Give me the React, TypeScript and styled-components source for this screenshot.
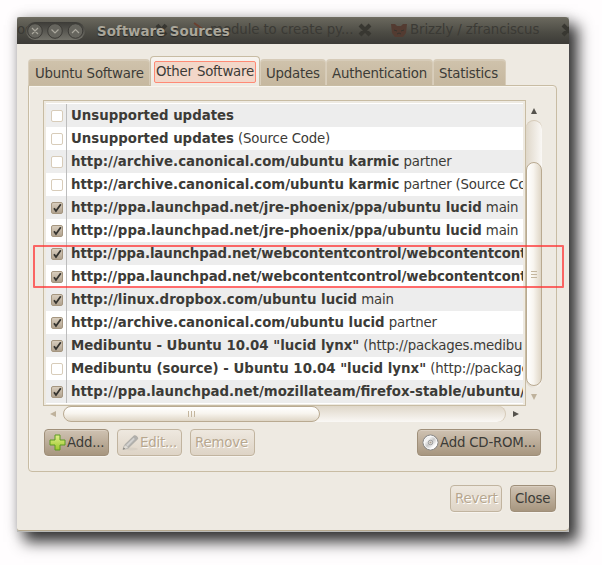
import React from "react";
import styled, { createGlobalStyle, css } from "styled-components";

const Global = createGlobalStyle`
  * { box-sizing: border-box; }
  body { margin: 0; background: #fffdfe; font: 13.33px/16px "DejaVu Sans", sans-serif; letter-spacing: -0.2px; color: #3c3b37; overflow: hidden; }
`;

const Desktop = styled.main`
  width: 602px;
  height: 565px;
  padding: 17px 33px 33px 17px;
`;

const Window = styled.section`
  position: relative;
  width: 552px;
  height: 515px;
  display: flex;
  flex-direction: column;
  background: #b9bab8;
  box-shadow: 8px 9px 14px 1px rgba(0, 0, 0, 0.78), 0 0 12px rgba(0, 0, 0, 0.17);
`;

const TitleBar = styled.header`
  position: relative;
  height: 27px;
  flex: none;
  display: flex;
  align-items: center;
  padding-left: 9px;
  overflow: hidden;
  border-radius: 3px 4px 0 0;
  background: linear-gradient(#716e63, #67655b 8%, #4b4a43 60%, #3c3b37);
`;

const Controls = styled.div`
  position: relative;
  width: 59px;
  height: 18px;
  border-radius: 9px;
  background: linear-gradient(#3c3b37, #74736b);
  svg { display: block; }
`;

const Title = styled.h1`
  position: relative;
  margin: 2px 0 0 12px;
  font-size: 13.4px;
  letter-spacing: 0;
  line-height: 18px;
  color: #aaa69a;
  text-shadow: 0 1px 1px #222;
  white-space: nowrap;
`;

const Ghost = styled.span<{ $x: number }>`
  position: absolute;
  left: ${(p) => p.$x}px;
  top: 5px;
  letter-spacing: -0.1px;
  color: #3b3a35;
  white-space: nowrap;
`;

const GhostMarks = styled.svg`
  position: absolute;
  left: 0;
  top: 0;
`;

const Body = styled.div`
  height: 487px;
  padding: 12px 12px 0 11px;
  background: #eeeae2;
  border-bottom: 1px solid #b5a88e;
  border-radius: 0 0 4px 3px;
`;

const Tabs = styled.nav`
  display: flex;
  align-items: flex-end;
  height: 29px;
  position: relative;
`;

const Tab = styled.div<{ $w: number; $active?: boolean }>`
  width: ${(p) => p.$w}px;
  height: 26px;
  padding: 4px 0 0 5px;
  line-height: 18px;
  white-space: nowrap;
  border: 1px solid #d6cbb8;
  border-top-width: 2px;
  border-left-color: #d9cebb;
  border-bottom: 0;
  border-radius: 4px 4px 0 0;
  background: linear-gradient(#cfc2ab, #c6b89f);
  &:first-child { padding-left: 6px; }
  ${(p) => p.$active && css`
    height: 30px;
    margin-bottom: -1px;
    padding: 4px 3px;
    border: 1px solid #c8bca3;
    border-bottom: 0;
    background: linear-gradient(#f7f4ef, #eeeae2);
  `}
`;

const Focus = styled.span`
  display: block;
  width: 102px;
  height: 22px;
  padding-left: 1px;
  line-height: 19px;
  border: 1px solid #ff8a75;
  border-radius: 2px;
  background: #f2d7c9;
`;

const Panel = styled.div`
  width: 529px;
  height: 387px;
  padding: 14px 0 0 14px;
  border: 1px solid #c8bca3;
  border-radius: 0 4px 4px 4px;
  box-shadow: inset 1px 1px #f8f5ef;
`;

const ScrollArea = styled.div`
  display: grid;
  grid-template-columns: 483px 16px;
  grid-template-rows: 306px 16px;
`;

const ListFrame = styled.div`
  padding: 2px;
  border: 1px solid #c8bca3;
`;

const List = styled.div`
  height: 301px;
  border-top: 1px solid #fff;
  overflow: hidden;
  background: #fff;
`;

const Row = styled.div`
  display: flex;
  height: 23px;
  background: #fff;
  white-space: nowrap;
  line-height: 23px;
  &:nth-child(odd) { background: #ededed; }
`;

const CheckCell = styled.div`
  flex: none;
  width: 21px;
  padding: 6px 0 0 5px;
  border-right: 1px solid #bdbdbd;
`;

const Checkbox = styled.div<{ $on: boolean }>`
  width: 12px;
  height: 12px;
  border: 1px solid ${(p) => (p.$on ? "#a59680" : "#d8ccb9")};
  border-radius: 2px;
  background: ${(p) => (p.$on ? "linear-gradient(#d8cdbd, #b1a390)" : "#fff")};
  svg { display: block; }
`;

const SourceName = styled.div<{ $tight: boolean }>`
  padding-left: 4px;
  b { letter-spacing: ${(p) => (p.$tight ? "-0.1px" : "0")}; }
`;

const VBar = styled.div`
  display: flex;
  flex-direction: column;
  align-items: center;
  padding-top: 8px;
  svg { display: block; flex: none; }
`;

const VTrough = styled.div`
  width: 16px;
  height: 268px;
  margin: 6px 0;
  padding-top: 42px;
  border-radius: 8px;
  background: linear-gradient(90deg, #dfd7c9, #faf8f5);
  box-shadow: inset 0 1px #d6cbb9;
`;

const VThumb = styled.div`
  display: flex;
  align-items: center;
  justify-content: center;
  height: 224px;
  border: 1px solid #b9aa91;
  border-radius: 8px;
  background: linear-gradient(90deg, #fff, #f8f5ef 45%, #dfd6c6);
`;

const HBar = styled.div`
  display: flex;
  align-items: center;
  padding-left: 7px;
  svg { display: block; flex: none; }
`;

const HTrough = styled.div`
  width: 443px;
  height: 16px;
  margin: 0 7px;
  border-radius: 8px;
  background: linear-gradient(#dfd7c9, #faf8f5);
  box-shadow: inset -1px 0 #d6cbb9;
`;

const HThumb = styled.div`
  display: flex;
  align-items: center;
  justify-content: center;
  width: 257px;
  height: 16px;
  border: 1px solid #b9aa91;
  border-radius: 8px;
  background: linear-gradient(#fff, #f8f5ef 45%, #dfd6c6);
`;

const Actions = styled.div`
  display: flex;
  gap: 8px;
  width: 497px;
  margin: 7px 0 0 1px;
`;

const Footer = styled.footer`
  display: flex;
  justify-content: flex-end;
  gap: 8px;
  margin: 13px 1px 0 0;
`;

const Button = styled.button<{ $w: number; $right?: boolean }>`
  display: flex;
  align-items: center;
  width: ${(p) => p.$w}px;
  height: 27px;
  margin: 0 0 0 ${(p) => (p.$right ? "auto" : "0")};
  padding: 0 0 0 4px;
  gap: 1px;
  border: 1px solid #9f8f79;
  border-radius: 4px;
  background: linear-gradient(#cfc2b2, #a7967f);
  box-shadow: inset 0 1px #d9cec0, 0 1px #f7f4ef;
  font: inherit;
  letter-spacing: inherit;
  color: #3c3b37;
  white-space: nowrap;
  &:disabled {
    border-color: #c1b49f;
    background: linear-gradient(#eee8df, #ded4c6);
    color: #b7a78f;
    text-shadow: 1px 1px #fff;
    box-shadow: 0 1px #f7f4ef;
  }
`;

const Highlight = styled.div`
  position: absolute;
  left: 16px;
  top: 228px;
  width: 531px;
  height: 43px;
  border: 2px solid rgba(255, 50, 50, 0.72);
  border-radius: 1px;
`;

const Check = () => (
  <svg width="11" height="10" viewBox="0 0 11 10">
    <path d="M2 5.2 4 8 8.8 1.3" fill="none" stroke="#34332f" strokeWidth="1.8" />
  </svg>
);

const Plus = () => (
  <svg width="17" height="17" viewBox="0 0 17 17">
    <defs><linearGradient id="leaf" x2="0" y2="1"><stop stopColor="#e2f08b" /><stop offset="1" stopColor="#9cc62c" /></linearGradient></defs>
    <path d="M6 1h5v5h5v5h-5v5H6v-5H1V6h5z" fill="url(#leaf)" stroke="#5c9a22" strokeLinejoin="round" />
  </svg>
);

const Pencil = () => (
  <svg width="17" height="17" viewBox="0 0 17 17">
    <ellipse cx="9" cy="15" rx="7" ry="1.5" fill="#d8d0c4" />
    <path d="M1 15.5 2.6 11 12 1.8q3.3-.6 3.8 3L6.3 14z" fill="#b1b0ad" stroke="#a4a29e" strokeWidth=".7" />
    <path d="m4 11 7.5-7.3 1.4 1.4L5.6 12.4z" fill="#d2d1cf" />
    <path d="m1 15.5 1.6-4.3q3-.2 3.5 2.9z" fill="#dedbd5" stroke="#bbb8b2" strokeWidth=".5" />
    <path d="m1 15.5.7-2 1.4 1.3z" fill="#77736d" />
  </svg>
);

const Disc = () => (
  <svg width="17" height="17" viewBox="0 0 17 17">
    <defs><linearGradient id="disc" x2="1" y2="1"><stop stopColor="#c5c5c5" /><stop offset=".3" stopColor="#f5f5f5" /><stop offset=".5" stopColor="#c7c7c7" /><stop offset=".75" stopColor="#fff" /><stop offset="1" stopColor="#ccc" /></linearGradient></defs>
    <circle cx="8.5" cy="8.5" r="7.5" fill="url(#disc)" stroke="#858585" />
    <circle cx="8.5" cy="8.5" r="6.4" fill="none" stroke="#fff" strokeWidth=".7" />
    <circle cx="8.5" cy="8.5" r="2.2" fill="#eee" stroke="#999" />
    <circle cx="8.5" cy="8.5" r="1.1" fill="#aa9f91" />
  </svg>
);

const tabs: [string, number][] = [["Ubuntu Software", 122], ["Other Software", 110], ["Updates", 66], ["Authentication", 107], ["Statistics", 73]];

const sources: [boolean, string, string][] = [
  [false, "Unsupported updates", ""],
  [false, "Unsupported updates", "(Source Code)"],
  [false, "http://archive.canonical.com/ubuntu karmic", "partner"],
  [false, "http://archive.canonical.com/ubuntu karmic", "partner (Source Code)"],
  [true, "http://ppa.launchpad.net/jre-phoenix/ppa/ubuntu lucid", "main"],
  [true, "http://ppa.launchpad.net/jre-phoenix/ppa/ubuntu lucid", "main"],
  [true, "http://ppa.launchpad.net/webcontentcontrol/webcontentcontrol/ubuntu", ""],
  [true, "http://ppa.launchpad.net/webcontentcontrol/webcontentcontrol/ubuntu", ""],
  [true, "http://linux.dropbox.com/ubuntu lucid", "main"],
  [true, "http://archive.canonical.com/ubuntu lucid", "partner"],
  [true, 'Medibuntu - Ubuntu 10.04 "lucid lynx"', "(http://packages.medibuntu.org)"],
  [false, 'Medibuntu (source) - Ubuntu 10.04 "lucid lynx"', "(http://packages.medibuntu.org)"],
  [true, "http://ppa.launchpad.net/mozillateam/firefox-stable/ubuntu/", ""],
];

export default function App() {
  return (
    <Desktop>
      <Global />
      <Window>
        <TitleBar>
          <Ghost $x={0}>oogle</Ghost>
          <Ghost $x={193}>module to create py...</Ghost>
          <Ghost $x={393}>Brizzly / zfranciscus</Ghost>
          <GhostMarks width="552" height="27">
            <g stroke="#383731" strokeWidth="4">
              <path d="m140 8 9 10m0-10-9 10M343 8l10 10m0-10-10 10M546 8l10 10m0-10-10 10" />
            </g>
            <path d="m177 6 7 5-4 6" fill="none" stroke="#6b4030" strokeWidth="2" />
            <path d="M374 7h4l2 2h4l2-2h4l-1 9-3 4h-8l-3-4z" fill="#533b31" />
            <path d="m377 13 3 1m4 0 3-1m-7 4 2-1 2 1" stroke="#36342e" fill="none" />
          </GhostMarks>
          <Controls>
            <svg width="59" height="18" viewBox="0 0 59 18">
              <g fill="#66655e" stroke="#3c3b37">
                <circle cx="9" cy="9" r="7.3" /><circle cx="29" cy="9" r="7.3" /><circle cx="49.5" cy="9" r="7.3" />
              </g>
              <path d="m6 6 6 6m0-6-6 6M25.500 7.500 29 11l3.500-3.500M46 11l3.500-3.500L53 11" fill="none" stroke="#aaa79d" strokeWidth="1.2" />
            </svg>
          </Controls>
          <Title>Software Sources</Title>
        </TitleBar>
        <Body>
          <Tabs>
            {tabs.map(([name, w], i) => (
              <Tab key={name} $w={w} $active={i === 1}>{i === 1 ? <Focus>{name}</Focus> : name}</Tab>
            ))}
          </Tabs>
          <Panel>
            <ScrollArea>
              <ListFrame>
                <List>
                  {sources.map(([on, name, note], i) => (
                    <Row key={i}>
                      <CheckCell><Checkbox $on={on}>{on && <Check />}</Checkbox></CheckCell>
                      <SourceName $tight={name.includes("webcontent")}><b>{name}</b> {note}</SourceName>
                    </Row>
                  ))}
                </List>
              </ListFrame>
              <VBar>
                <svg width="6" height="6"><path d="M3 0 6 6H0z" fill="#55534d" /></svg>
                <VTrough>
                  <VThumb><svg width="6" height="7"><path d="M0 .5h6M0 3.500h6M0 6.500h6" stroke="#c4b69e" /></svg></VThumb>
                </VTrough>
                <svg width="6" height="6"><path d="M0 0h6L3 6z" fill="#bfb29c" /></svg>
              </VBar>
              <HBar>
                <svg width="6" height="6"><path d="M6 0v6L0 3z" fill="#bfb29c" /></svg>
                <HTrough>
                  <HThumb><svg width="7" height="6"><path d="M.5 0v6M3.500 0v6M6.500 0v6" stroke="#c4b69e" /></svg></HThumb>
                </HTrough>
                <svg width="6" height="6"><path d="M0 0v6l6-3z" fill="#55534d" /></svg>
              </HBar>
            </ScrollArea>
            <Actions>
              <Button $w={65}><Plus />Add...</Button>
              <Button $w={65} disabled><Pencil />Edit...</Button>
              <Button $w={65} disabled>Remove</Button>
              <Button $w={124} $right><Disc />Add CD-ROM...</Button>
            </Actions>
          </Panel>
          <Footer>
            <Button $w={52} disabled>Revert</Button>
            <Button $w={46}>Close</Button>
          </Footer>
        </Body>
        <Highlight />
      </Window>
    </Desktop>
  );
}
